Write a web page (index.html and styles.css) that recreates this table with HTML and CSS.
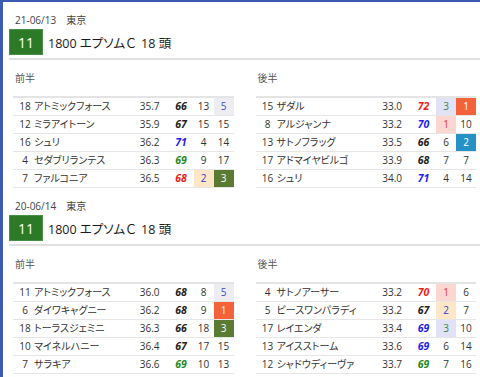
FILE: index.html
```html
<!DOCTYPE html>
<html lang="ja">
<head>
<meta charset="utf-8">
<title>上がり比較</title>
<link rel="stylesheet" href="styles.css">
</head>
<body>
<div class="page">
  <section class="race">
    <div class="date">21-06/13　東京</div>
    <div class="head">
      <span class="rno">11</span>
      <span class="title">1800 エプソム<span class="grade">Ｃ</span> 18 頭</span>
    </div>
    <div class="halves">
      <div class="half">
        <div class="label">前半</div>
        <table class="rank">
          <colgroup><col class="c-no"><col><col class="c-time"><col class="c-idx"><col class="c-pos"><col class="c-pos"></colgroup>
          <tr><td class="no">18</td><td class="name">アトミックフォース</td><td class="time">35.7</td><td class="idx">66</td><td class="pos">13</td><td class="pos q5">5</td></tr>
          <tr><td class="no">12</td><td class="name">ミラアイトーン</td><td class="time">35.9</td><td class="idx">67</td><td class="pos">15</td><td class="pos">15</td></tr>
          <tr><td class="no">16</td><td class="name">シュリ</td><td class="time">36.2</td><td class="idx ib">71</td><td class="pos">4</td><td class="pos">14</td></tr>
          <tr><td class="no">4</td><td class="name">セダブリランテス</td><td class="time">36.3</td><td class="idx ig">69</td><td class="pos">9</td><td class="pos">17</td></tr>
          <tr><td class="no">7</td><td class="name">ファルコニア</td><td class="time">36.5</td><td class="idx ir">68</td><td class="pos p2">2</td><td class="pos r3">3</td></tr>
        </table>
      </div>
      <div class="half">
        <div class="label">後半</div>
        <table class="rank">
          <colgroup><col class="c-no"><col><col class="c-time"><col class="c-idx"><col class="c-pos"><col class="c-pos"></colgroup>
          <tr><td class="no">15</td><td class="name">ザダル</td><td class="time">33.0</td><td class="idx ir">72</td><td class="pos p3">3</td><td class="pos r1">1</td></tr>
          <tr><td class="no">8</td><td class="name">アルジャンナ</td><td class="time">33.2</td><td class="idx ib">70</td><td class="pos p1">1</td><td class="pos">10</td></tr>
          <tr><td class="no">13</td><td class="name">サトノフラッグ</td><td class="time">33.5</td><td class="idx">66</td><td class="pos">6</td><td class="pos r2">2</td></tr>
          <tr><td class="no">17</td><td class="name">アドマイヤビルゴ</td><td class="time">33.9</td><td class="idx">68</td><td class="pos">7</td><td class="pos">7</td></tr>
          <tr><td class="no">16</td><td class="name">シュリ</td><td class="time">34.0</td><td class="idx ib">71</td><td class="pos">4</td><td class="pos">14</td></tr>
        </table>
      </div>
    </div>
  </section>

  <section class="race">
    <div class="date">20-06/14　東京</div>
    <div class="head">
      <span class="rno">11</span>
      <span class="title">1800 エプソム<span class="grade">Ｃ</span> 18 頭</span>
    </div>
    <div class="halves">
      <div class="half">
        <div class="label">前半</div>
        <table class="rank">
          <colgroup><col class="c-no"><col><col class="c-time"><col class="c-idx"><col class="c-pos"><col class="c-pos"></colgroup>
          <tr><td class="no">11</td><td class="name">アトミックフォース</td><td class="time">36.0</td><td class="idx">68</td><td class="pos">8</td><td class="pos q5">5</td></tr>
          <tr><td class="no">6</td><td class="name">ダイワキャグニー</td><td class="time">36.2</td><td class="idx">68</td><td class="pos">9</td><td class="pos r1">1</td></tr>
          <tr><td class="no">18</td><td class="name">トーラスジェミニ</td><td class="time">36.3</td><td class="idx">66</td><td class="pos">18</td><td class="pos r3">3</td></tr>
          <tr><td class="no">10</td><td class="name">マイネルハニー</td><td class="time">36.4</td><td class="idx">67</td><td class="pos">17</td><td class="pos">15</td></tr>
          <tr><td class="no">7</td><td class="name">サラキア</td><td class="time">36.6</td><td class="idx ig">69</td><td class="pos">10</td><td class="pos">13</td></tr>
        </table>
      </div>
      <div class="half">
        <div class="label">後半</div>
        <table class="rank">
          <colgroup><col class="c-no"><col><col class="c-time"><col class="c-idx"><col class="c-pos"><col class="c-pos"></colgroup>
          <tr><td class="no">4</td><td class="name">サトノアーサー</td><td class="time">33.2</td><td class="idx ir">70</td><td class="pos p1">1</td><td class="pos">6</td></tr>
          <tr><td class="no">5</td><td class="name">ピースワンパラディ</td><td class="time">33.2</td><td class="idx">67</td><td class="pos p2">2</td><td class="pos">7</td></tr>
          <tr><td class="no">17</td><td class="name">レイエンダ</td><td class="time">33.4</td><td class="idx ib">69</td><td class="pos p3">3</td><td class="pos">10</td></tr>
          <tr><td class="no">13</td><td class="name">アイスストーム</td><td class="time">33.6</td><td class="idx ib">69</td><td class="pos">6</td><td class="pos">14</td></tr>
          <tr><td class="no">12</td><td class="name">シャドウディーヴァ</td><td class="time">33.7</td><td class="idx ig">69</td><td class="pos">7</td><td class="pos">16</td></tr>
        </table>
      </div>
    </div>
  </section>
</div>
</body>
</html>
```

FILE: styles.css
```css
html {
  height: 100%;
}

body {
  margin: 0;
  min-height: 100%;
  box-sizing: border-box;
  border-top: 2px solid #3b5bb3;
  border-left: 3px solid #3b5bb3;
  background: #ffffff;
  color: #333333;
  font-family: "Segoe UI", "Open Sans", "Noto Sans CJK JP", sans-serif;
  font-feature-settings: "palt";
}

.page {
  padding-left: 6px;
}

.race {
  padding-top: 11px;
}

.date {
  padding-left: 6px;
  font-size: 10px;
  line-height: 14px;
  color: #444444;
  margin-bottom: 2px;
}

.head {
  display: flex;
  align-items: center;
  padding-bottom: 3px;
  border-bottom: 2px solid #e0e0e0;
}

.rno {
  width: 34px;
  height: 26px;
  box-sizing: border-box;
  display: flex;
  align-items: center;
  justify-content: center;
  background: #2c7a28;
  border: 1px solid #4a8f46;
  color: #ffffff;
  font-size: 14px;
}

.title {
  margin-left: 5px;
  font-size: 12.5px;
  color: #1a1a1a;
}

.grade {
  margin-left: 1px;
  margin-right: 2px;
}

.halves {
  display: grid;
  grid-template-columns: 1fr 1fr;
  column-gap: 22px;
  padding: 0 4px;
}

.label {
  margin-top: 11px;
  margin-bottom: 11px;
  padding-left: 2px;
  font-size: 10px;
  line-height: 14px;
  color: #555555;
}

.rank {
  width: 100%;
  table-layout: fixed;
  border-collapse: separate;
  border-spacing: 0;
  border-top: 2px solid #e4e4e4;
  font-size: 10px;
}

.c-no { width: 20px; }
.c-time { width: 30px; }
.c-idx { width: 30px; }
.c-pos { width: 20px; }

.rank td {
  box-sizing: border-box;
  height: 18px;
  padding: 0;
  border-bottom: 1px solid #e6e6e6;
  line-height: 17px;
  white-space: nowrap;
  overflow: hidden;
  color: #333333;
}

.rank td.no {
  padding-left: 4px;
  text-align: center;
}

.rank td.name {
  padding-left: 1px;
}

.rank td.time {
  text-align: right;
  padding-right: 4px;
}

.rank td.idx {
  padding-left: 5px;
  text-align: center;
  font-weight: 700;
  font-style: italic;
  font-size: 10.5px;
  color: #222222;
}

.rank td.ir { color: #ee1a1a; }
.rank td.ib { color: #1c1cee; }
.rank td.ig { color: #1f8a22; }

.rank td.pos {
  text-align: center;
}

.rank td.r1 { background: #f4623a; color: #ffffff; }
.rank td.r2 { background: #2592c6; color: #ffffff; }
.rank td.r3 { background: #5b7a32; color: #ffffff; }
.rank td.p1 { background: #fcd6d0; color: #e53935; }
.rank td.p2 { background: #fde7c8; color: #2b3fcc; }
.rank td.p3 { background: #e2e2f6; color: #2e8b4a; }
.rank td.q5 { background: #ececf1; color: #3a4fc0; }
```
